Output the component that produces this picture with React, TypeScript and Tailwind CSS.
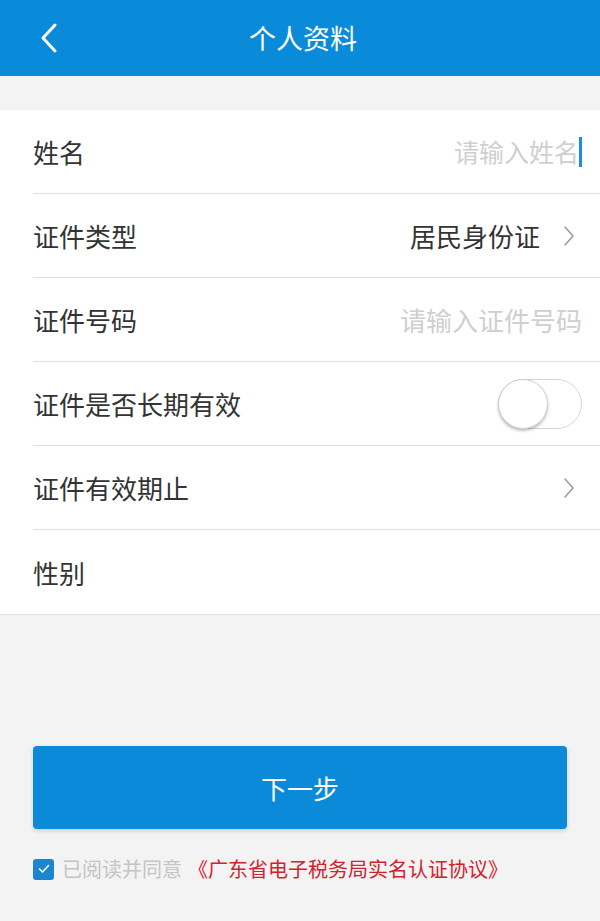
import React from 'react';

const font = { fontFamily: '"Noto Sans CJK SC", "Noto Sans", sans-serif' };

const Chevron = () => (
  <svg width="14" height="22" viewBox="0 0 14 22" fill="none" className="ml-[22px]">
    <path d="M3 2 L11 11 L3 20" stroke="#9a9a9a" strokeWidth="1.5" strokeLinecap="round" strokeLinejoin="round" />
  </svg>
);

const Row: React.FC<{ label: string; children?: React.ReactNode; last?: boolean }> = ({ label, children, last }) => (
  <div className="pl-[33px]">
    <div className={`h-[84px] flex items-center justify-between pr-[24px] ${last ? '' : 'border-b border-[#dedede]'}`}>
      <span className="text-[26px] text-[#333]">{label}</span>
      <div className="flex items-center">{children}</div>
    </div>
  </div>
);

const App: React.FC = () => {
  return (
    <div className="w-[600px] h-[921px] bg-[#f3f3f3] flex flex-col" style={font}>
      {/* Header */}
      <div className="h-[76px] bg-[#0a8bd9] flex items-center relative shrink-0">
        <svg width="20" height="30" viewBox="0 0 20 30" fill="none" className="absolute left-[39px] top-[23px]">
          <path d="M16 2 L4 15 L16 28" stroke="#fff" strokeWidth="3" strokeLinecap="round" strokeLinejoin="round" />
        </svg>
        <div className="flex-1 text-center text-white text-[27px] pl-[6px]">个人资料</div>
      </div>

      {/* Form */}
      <div className="mt-[34px] bg-white border-b border-[#dedede]">
        <Row label="姓名">
          <span className="text-[25px] text-[#cfcfcf]">请输入姓名</span>
          <span className="w-[3px] h-[30px] bg-[#1d8fd6] -mr-[6px]"></span>
        </Row>
        <Row label="证件类型">
          <span className="text-[26px] text-[#333]">居民身份证</span>
          <Chevron />
        </Row>
        <Row label="证件号码">
          <span className="text-[26px] text-[#cfcfcf] -mr-[6px]">请输入证件号码</span>
        </Row>
        <Row label="证件是否长期有效">
          <div className="w-[84px] h-[50px] rounded-full border border-[#d6d6d6] bg-white relative -mr-[6px]">
            <div className="absolute left-[-1px] top-[-1px] w-[50px] h-[50px] rounded-full bg-white border border-[#cfcfcf] shadow-[0_2px_3px_rgba(0,0,0,0.25)]"></div>
          </div>
        </Row>
        <Row label="证件有效期止">
          <Chevron />
        </Row>
        <Row label="性别" last />
      </div>

      <div className="flex-1" />

      {/* Button */}
      <div className="px-[33px]">
        <button className="w-full h-[83px] bg-[#0b8ad9] rounded-[4px] text-white text-[26px] shadow-[0_2px_4px_rgba(0,0,0,0.15)]">
          下一步
        </button>
      </div>

      {/* Agreement */}
      <div className="flex items-center pl-[33px] mt-[25px] mb-[37px]">
        <div className="w-[21px] h-[21px] rounded-[3px] bg-[#1a86d0] flex items-center justify-center">
          <svg width="12" height="10" viewBox="0 0 12 10" fill="none">
            <path d="M1.5 5 L4.5 8 L10.5 1.5" stroke="#fff" strokeWidth="1.6" strokeLinecap="round" strokeLinejoin="round" />
          </svg>
        </div>
        <span className="ml-[8px] text-[20px] text-[#c4c4c4]">已阅读并同意</span>
        <span className="ml-[6px] text-[20px] text-[#d2222d]">《广东省电子税务局实名认证协议》</span>
      </div>
    </div>
  );
};

export default App;
